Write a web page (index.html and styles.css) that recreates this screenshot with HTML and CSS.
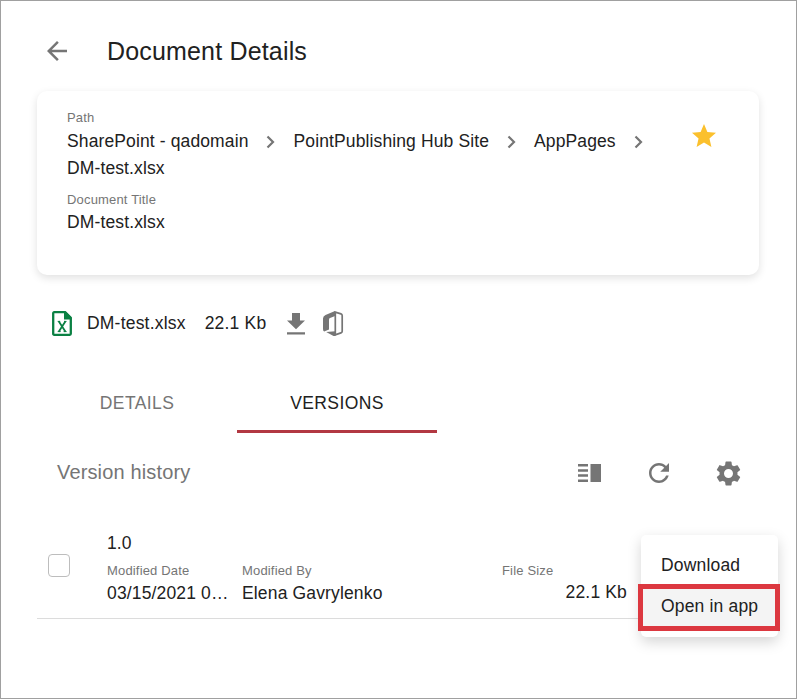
FILE: index.html
```html
<!DOCTYPE html>
<html lang="en">
<head>
<meta charset="utf-8">
<title>Document Details</title>
<link rel="stylesheet" href="styles.css">
</head>
<body>
<main class="page">
  <header class="topbar">
    <svg class="back" viewBox="0 0 24 24"><path d="M20 11H7.830l5.590-5.590L12 4l-8 8 8 8 1.410-1.410L7.830 13H20v-2z"/></svg>
    <h1>Document Details</h1>
  </header>

  <section class="card">
    <div class="info">
      <div class="label">Path</div>
      <nav class="crumbs">
        <span>SharePoint - qadomain</span>
        <svg class="chevron" viewBox="0 0 9 14"><path d="M1.500 1.500 7 7l-5.500 5.500"/></svg>
        <span>PointPublishing Hub Site</span>
        <svg class="chevron" viewBox="0 0 9 14"><path d="M1.500 1.500 7 7l-5.500 5.500"/></svg>
        <span>AppPages</span>
        <svg class="chevron" viewBox="0 0 9 14"><path d="M1.500 1.500 7 7l-5.500 5.500"/></svg>
        <span>DM-test.xlsx</span>
      </nav>
      <div class="label label-title">Document Title</div>
      <div class="value">DM-test.xlsx</div>
    </div>
    <svg class="star" viewBox="2 2 20 19"><path d="M12 17.270 18.180 21l-1.640-7.030L22 9.240l-7.190-.61L12 2 9.190 8.630 2 9.240l5.460 4.730L5.820 21z"/></svg>
  </section>

  <section class="file">
    <svg class="excel" viewBox="0 0 20 25"><path class="sheet" d="M2.200 1.200H13l5.800 5.800v15.800q0 1-1 1H2.200q-1 0-1-1V2.200q0-1 1-1z"/><path class="fold" d="M12 .5h2l5.500 5.500v2.500H12z"/><path class="mark" d="M6.700 10.300 13.500 20.700M13.500 10.300 6.700 20.700"/><path class="serif" d="M5.700 20.600h3M11.600 20.600h3M5.700 10.400h2.500M12 10.400h2.500"/></svg>
    <span class="filename">DM-test.xlsx</span>
    <span class="filesize">22.1 Kb</span>
    <svg class="download" viewBox="0 0 18 22"><path d="M18 7.500h-5V0H5v7.500H0L9 16.300zM0 19.300h18V21.500H0z"/></svg>
    <svg class="office" viewBox="0 0 20 25"><path class="solid" d="M12 0 2.500 4Q0 5.200 0 7.500v10.500q0 2.200 1.200 2.500L6 18.500V8.700q0-1.200 1-1.600L12.800 4.800z"/><path class="solid" d="M3.200 21 12.500 20.200v4.800L10.500 25z"/><path class="edge" d="M11.400.9 18 2.900q1.200.4 1.200 1.800v15.600q0 1.200-1.200 1.600l-6.600 2.200M12.300 1v23"/></svg>
  </section>

  <nav class="tabs">
    <a class="tab">DETAILS</a>
    <a class="tab active">VERSIONS</a>
  </nav>

  <section class="toolbar">
    <h2>Version history</h2>
    <svg class="columns" viewBox="0 0 23 18"><path d="M0 0h10v2.500H0zM0 5.200h10v2.500H0zM0 10.300h10v2.500H0zM0 15.500h10V18H0zM12.500 0H23v18H12.500z"/></svg>
    <svg class="refresh" viewBox="4 4 16 16"><path d="M17.650 6.350C16.200 4.900 14.210 4 12 4c-4.420 0-7.990 3.580-7.990 8s3.570 8 7.990 8c3.730 0 6.840-2.550 7.730-6h-2.080c-.82 2.330-3.040 4-5.650 4-3.310 0-6-2.690-6-6s2.690-6 6-6c1.660 0 3.140.69 4.220 1.780L13 11h7V4l-2.350 2.350z"/></svg>
    <svg class="gear" viewBox="2 2 20 20"><path d="M19.140 12.940c.04-.3.060-.61.060-.94s-.02-.64-.07-.94l2.030-1.580c.18-.14.230-.41.120-.61l-1.920-3.320c-.12-.22-.37-.29-.59-.22l-2.390.96c-.5-.38-1.030-.7-1.620-.94L14.400 2.810c-.04-.24-.24-.41-.48-.41h-3.840c-.24 0-.43.170-.47.410L9.250 5.350c-.59.240-1.130.57-1.620.94L5.240 5.330c-.22-.08-.47 0-.59.220L2.740 8.870c-.12.210-.08.470.12.610l2.030 1.580c-.05.300-.09.630-.09.940s.02.640.070.940l-2.030 1.580c-.18.140-.23.410-.12.610l1.920 3.320c.12.220.37.290.59.220l2.390-.96c.5.380 1.030.700 1.620.940l.36 2.540c.05.240.24.410.48.410h3.840c.24 0 .44-.17.470-.41l.36-2.540c.59-.24 1.130-.56 1.620-.94l2.390.96c.22.080.47 0 .59-.22l1.920-3.320c.12-.22.070-.47-.12-.61zM12 15.600A3.600 3.600 0 1 1 12 8.400a3.600 3.600 0 0 1 0 7.200z"/></svg>
  </section>

  <section class="row">
    <span class="checkbox"></span>
    <div class="record">
      <div class="number">1.0</div>
      <div class="fields">
        <div class="field"><div class="label">Modified Date</div><div class="value">03/15/2021 0…</div></div>
        <div class="field"><div class="label">Modified By</div><div class="value">Elena Gavrylenko</div></div>
        <div class="field size"><div class="label">File Size</div><div class="value">22.1 Kb</div></div>
      </div>
    </div>
    <div class="menu">
      <div class="item">Download</div>
      <div class="item selected">Open in app</div>
    </div>
  </section>
</main>
</body>
</html>
```
FILE: styles.css
```css
* { box-sizing: border-box; }
body {
  margin: 0;
  background: #fff;
  color: #212121;
  font: 17.5px/27px "Liberation Sans", Arial, sans-serif;
  letter-spacing: .13px;
}
svg { display: block; flex: none; fill: #757575; overflow: visible; }
h1, h2 { margin: 0; font-weight: 400; }
.page {
  width: 797px;
  height: 699px;
  border: 1px solid #a0a0a0;
  padding: 0 37px 0 36px;
  overflow: hidden;
}
.topbar { display: flex; align-items: center; height: 90px; padding: 10px 0 0 5px; }
.back { width: 30px; height: 30px; }
h1 { margin-left: 35px; font-size: 25px; letter-spacing: .17px; }
.card {
  display: flex;
  width: 722px;
  height: 184px;
  padding: 17px 43px 0 30px;
  border-radius: 10px;
  box-shadow: 0 3px 8px rgba(0, 0, 0, .12);
}
.info { flex: 1; }
.label { font-size: 13px; line-height: 20px; letter-spacing: .17px; color: #757575; }
.label-title { margin-top: 8px; }
.info .value { line-height: 24px; }
.crumbs { display: flex; flex-wrap: wrap; align-items: center; width: 600px; letter-spacing: .12px; }
.chevron { width: 9px; height: 14px; margin: 0 18.200px 0 17.800px; fill: none; stroke: #757575; stroke-width: 2.2; }
.star { width: 24px; height: 23px; margin-top: 16px; fill: #fbc02d; }
.file { display: flex; align-items: center; height: 27px; margin-top: 35px; padding-left: 15px; letter-spacing: .2px; }
.excel { width: 20px; height: 25px; }
.sheet { fill: none; stroke: #0a8043; stroke-width: 2.3; }
.fold { fill: #0a8043; }
.mark { fill: none; stroke: #0a8043; stroke-width: 1.8; }
.serif { fill: none; stroke: #0a8043; stroke-width: 1; }
.filename { margin-left: 15px; }
.filesize { margin-left: 19px; }
.download { width: 18px; height: 22px; margin-left: 21px; }
.office { width: 20px; height: 25px; margin: 0 0 0 18px; }
.edge { fill: none; stroke: #757575; stroke-width: 1.7; }
.tabs { display: flex; height: 60px; margin-top: 36px; }
.tab { width: 200px; padding-top: 17px; text-align: center; color: #757575; letter-spacing: .4px; }
.active { color: #212121; border-bottom: 3px solid #b23842; }
.toolbar { display: flex; align-items: center; height: 40px; margin-top: 20px; padding-left: 20px; }
h2 { flex: 1; font-size: 20px; line-height: 26px; margin-top: -2px; color: #757575; letter-spacing: .15px; }
.columns { width: 23px; height: 18px; }
.refresh { width: 20px; height: 20px; margin-left: 48px; }
.gear { width: 25px; height: 25px; margin: 0 18px 0 47.500px; }
.row {
  position: relative;
  display: flex;
  width: 722px;
  height: 126px;
  border-bottom: 1px solid #dcdcdc;
}
.checkbox { width: 22px; height: 23px; margin: 61px 0 0 11px; border: 1px solid #bdbdbd; border-radius: 4px; }
.record { margin-left: 37px; padding-top: 37px; }
.fields { display: flex; margin-top: 4px; }
.field { width: 135px; }
.field:nth-child(2) { width: 260px; }
.field .value { line-height: 25px; white-space: nowrap; letter-spacing: .15px; }
.size { width: 125px; }
.field.size .value { line-height: 23px; text-align: right; }
.menu {
  position: absolute;
  left: 604px;
  top: 42px;
  width: 137px;
  height: 102px;
  padding-top: 10px;
  border-radius: 5px;
  background: #fff;
  box-shadow: 0 5px 14px rgba(0, 0, 0, .17);
}
.item { height: 40px; padding-left: 20px; line-height: 40px; letter-spacing: .17px; }
.selected {
  width: 142px;
  height: 47px;
  margin: -1px 0 0 -3px;
  padding-left: 18px;
  border: 5px solid #dc3840;
  background: #f4f4f4;
  line-height: 35px;
}
```
